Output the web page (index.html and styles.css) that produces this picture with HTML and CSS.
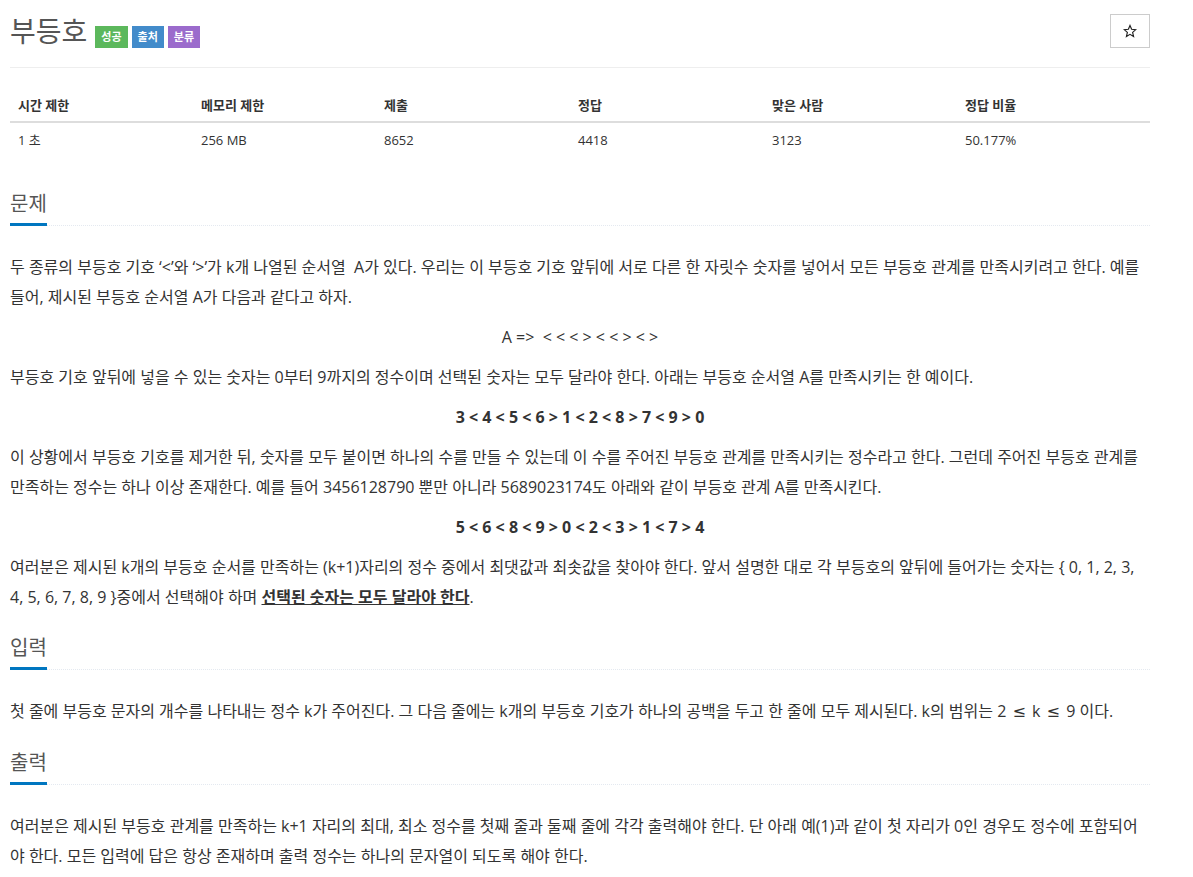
FILE: index.html
```html
<!DOCTYPE html>
<html lang="ko">
<head>
    <meta charset="UTF-8">
    <title>부등호</title>
    <link rel="stylesheet" href="styles.css">
</head>
<body>
    <div class="container">
        <div class="page-header">
            <h1>
                <span class="title">부등호</span>
                <span class="label label-success">성공</span>
                <span class="label label-info">출처</span>
                <span class="label label-purple">분류</span>
            </h1>
            <button class="star-btn" aria-label="즐겨찾기">
                <svg width="14" height="14" viewBox="0 0 24 24">
                    <path d="M12 2.5l2.8 6.6 7.1.6-5.4 4.7 1.6 7-6.1-3.7-6.1 3.7 1.6-7-5.4-4.7 7.1-.6z" fill="none" stroke="#222" stroke-width="2" stroke-linejoin="miter"/>
                </svg>
            </button>
        </div>

        <table class="info-table">
            <colgroup>
                <col class="col-a"><col class="col-a"><col class="col-b">
                <col class="col-b"><col class="col-c"><col class="col-c">
            </colgroup>
            <thead>
                <tr>
                    <th>시간 제한</th>
                    <th>메모리 제한</th>
                    <th>제출</th>
                    <th>정답</th>
                    <th>맞은 사람</th>
                    <th>정답 비율</th>
                </tr>
            </thead>
            <tbody>
                <tr>
                    <td>1 초</td>
                    <td>256 MB</td>
                    <td>8652</td>
                    <td>4418</td>
                    <td>3123</td>
                    <td>50.177%</td>
                </tr>
            </tbody>
        </table>

        <section class="problem-section">
            <div class="headline"><h2>문제</h2></div>
            <div class="problem-text">
                <p>두 종류의 부등호 기호 ‘&lt;’와 ‘&gt;’가 k개 나열된 순서열 &nbsp;A가 있다. 우리는 이 부등호 기호 앞뒤에 서로 다른 한 자릿수 숫자를 넣어서 모든 부등호 관계를 만족시키려고 한다. 예를 들어, 제시된 부등호 순서열 A가 다음과 같다고 하자.</p>
                <p class="center">A =&gt; &nbsp;&lt; &lt; &lt; &gt; &lt; &lt; &gt; &lt; &gt;</p>
                <p>부등호 기호 앞뒤에 넣을 수 있는 숫자는 0부터 9까지의 정수이며 선택된 숫자는 모두 달라야 한다. 아래는 부등호 순서열 A를 만족시키는 한 예이다.</p>
                <p class="center"><strong>3 &lt; 4 &lt; 5 &lt; 6 &gt; 1 &lt; 2 &lt; 8 &gt; 7 &lt; 9 &gt; 0</strong></p>
                <p>이 상황에서 부등호 기호를 제거한 뒤, 숫자를 모두 붙이면 하나의 수를 만들 수 있는데 이 수를 주어진 부등호 관계를 만족시키는 정수라고 한다. 그런데 주어진 부등호 관계를 만족하는 정수는 하나 이상 존재한다. 예를 들어 3456128790 뿐만 아니라 5689023174도 아래와 같이 부등호 관계 A를 만족시킨다.</p>
                <p class="center"><strong>5 &lt; 6 &lt; 8 &lt; 9 &gt; 0 &lt; 2 &lt; 3 &gt; 1 &lt; 7 &gt; 4</strong></p>
                <p>여러분은 제시된 k개의 부등호 순서를 만족하는 (k+1)자리의 정수 중에서 최댓값과 최솟값을 찾아야 한다. 앞서 설명한 대로 각 부등호의 앞뒤에 들어가는 숫자는 { 0, 1, 2, 3, 4, 5, 6, 7, 8, 9 }중에서 선택해야 하며 <u><strong>선택된 숫자는 모두 달라야 한다</strong></u>.</p>
            </div>
        </section>

        <section class="problem-section">
            <div class="headline"><h2>입력</h2></div>
            <div class="problem-text">
                <p>첫 줄에 부등호 문자의 개수를 나타내는 정수 k가 주어진다. 그 다음 줄에는 k개의 부등호 기호가 하나의 공백을 두고 한 줄에 모두 제시된다. k의 범위는 2 <span class="sym">≤</span> k <span class="sym">≤</span> 9 이다.</p>
            </div>
        </section>

        <section class="problem-section">
            <div class="headline"><h2>출력</h2></div>
            <div class="problem-text">
                <p>여러분은 제시된 부등호 관계를 만족하는 k+1 자리의 최대, 최소 정수를 첫째 줄과 둘째 줄에 각각 출력해야 한다. 단 아래 예(1)과 같이 첫 자리가 0인 경우도 정수에 포함되어야 한다. 모든 입력에 답은 항상 존재하며 출력 정수는 하나의 문자열이 되도록 해야 한다.</p>
            </div>
        </section>
    </div>
</body>
</html>
```

FILE: styles.css
```css
body {
    margin: 0;
    font-family: "Open Sans", "Noto Sans CJK KR", sans-serif;
    font-size: 13px;
    color: #333;
    background: #fff;
}

.container {
    width: 1140px;
    margin-left: 10px;
}

.page-header {
    display: flex;
    justify-content: space-between;
    align-items: flex-start;
    padding: 12px 0 17px;
    border-bottom: 1px solid #eee;
}

.page-header h1 {
    margin: 0;
    font-weight: 400;
    display: flex;
    align-items: flex-end;
    gap: 4px;
}

.title {
    font-size: 28px;
    color: #555;
    line-height: 38px;
    margin-right: 4px;
}

.label {
    display: inline-block;
    font-size: 11px;
    font-weight: 700;
    color: #fff;
    height: 22px;
    line-height: 22px;
    padding: 0 6px;
    margin-bottom: 2px;
}

.label-success { background: #5cb85c; }
.label-info { background: #428bca; }
.label-purple { background: #9b6bcc; }

.star-btn {
    width: 40px;
    height: 34px;
    margin-top: 2px;
    background: #fff;
    border: 1px solid #ccc;
    padding: 0;
    display: flex;
    align-items: center;
    justify-content: center;
}

.info-table {
    width: 1140px;
    table-layout: fixed;
    border-collapse: collapse;
    margin-top: 20px;
}

.info-table .col-a { width: 183px; }
.info-table .col-b { width: 194px; }
.info-table .col-c { width: 193px; }

.info-table th,
.info-table td {
    text-align: left;
    padding: 7px 8px 8px;
    line-height: 20px;
}

.info-table th {
    font-weight: 700;
    padding-bottom: 6px;
    border-bottom: 2px solid #ddd;
}

.headline {
    border-bottom: 1px dotted #e4e9f0;
    margin: 0 0 26px;
}

.headline h2 {
    display: inline-block;
    font-size: 20px;
    font-weight: 400;
    color: #555;
    margin: 0 0 -1px;
    padding-bottom: 4px;
    border-bottom: 3px solid #0076c0;
    line-height: 30px;
}

.problem-section {
    margin-top: 21px;
}

.problem-section:first-of-type {
    margin-top: 31px;
}

.problem-text p {
    font-size: 16px;
    line-height: 30px;
    margin: 0 0 10px;
}

.problem-text .center {
    text-align: center;
}

.problem-text u {
    text-decoration-thickness: 1px;
}

.problem-text .sym {
    font-family: "DejaVu Sans", sans-serif;
    padding: 0 2px;
}
```
